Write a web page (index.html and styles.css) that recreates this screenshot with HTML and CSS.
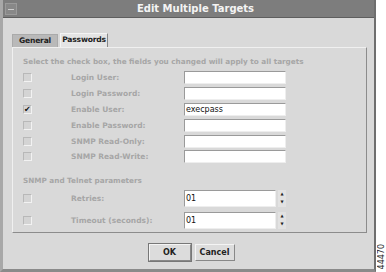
FILE: index.html
```html
<!DOCTYPE html>
<html lang="en">
<head>
<meta charset="utf-8"/>
<title>Edit Multiple Targets</title>
<link rel="stylesheet" href="styles.css">
</head>
<body>
<div class="screen">
  <div class="window">
    <div class="titlebar">
      <span class="winbtn"></span>
      <span class="title">Edit Multiple Targets</span>
    </div>
    <div class="body">
      <div class="tabs">
        <span class="tab general">General</span>
        <span class="tab active">Passwords</span>
      </div>
      <div class="panel">
        <p class="hint">Select the check box, the fields you changed will apply to all targets</p>

        <div class="row"><span class="check"></span><label>Login User:</label><input class="field" type="text"></div>
        <div class="row"><span class="check"></span><label>Login Password:</label><input class="field" type="text"></div>
        <div class="row"><span class="check on">&#10004;</span><label>Enable User:</label><input class="field" type="text" value="execpass"></div>
        <div class="row"><span class="check"></span><label>Enable Password:</label><input class="field" type="text"></div>
        <div class="row"><span class="check"></span><label>SNMP Read-Only:</label><input class="field" type="text"></div>
        <div class="row"><span class="check"></span><label>SNMP Read-Write:</label><input class="field" type="text"></div>

        <p class="section">SNMP and Telnet parameters</p>

        <div class="row spin-row"><span class="check"></span><label>Retries:</label>
          <div class="spinner"><input class="field" type="text" value="01"><span class="arrows"><i>&#9650;</i><i>&#9660;</i></span></div>
        </div>
        <div class="row spin-row"><span class="check"></span><label>Timeout (seconds):</label>
          <div class="spinner"><input class="field" type="text" value="01"><span class="arrows"><i>&#9650;</i><i>&#9660;</i></span></div>
        </div>
      </div>
      <div class="buttons">
        <button class="btn default">OK</button>
        <button class="btn">Cancel</button>
      </div>
    </div>
  </div>
  <div class="figno">44470</div>
</div>
</body>
</html>
```
FILE: styles.css
```css
*{margin:0;padding:0;box-sizing:border-box}
body{
  background:#fff;
  font-family:"DejaVu Sans",sans-serif;
  width:386px;
  height:272px;
  overflow:hidden;
}
.screen{display:flex;height:272px}
.window{
  width:376px;
  height:272px;
  background:#d9d9d9;
  border-left:3px solid #a8a8a8;
  border-right:2px solid #6e6e6e;
  border-bottom:3px solid #8a8a8a;
  display:flex;
  flex-direction:column;
}
.titlebar{
  height:18px;
  background:#7d7d7d;
  border-bottom:1px solid #5e5e5e;
  position:relative;
  display:flex;
  align-items:center;
  justify-content:center;
}
.winbtn{
  position:absolute;
  left:2px;top:3px;
  width:12px;height:12px;
  border:1px solid #9a9a9a;
  background:#888;
}
.winbtn::after{
  content:"";
  position:absolute;
  left:2px;top:5px;
  width:6px;height:1px;
  background:#ccc;
}
.title{
  color:#f4f4f4;
  font-size:10px;
  font-weight:bold;
  margin-left:14px;
}
.body{
  flex:1;
  padding:15px 7px 0 9px;
  display:flex;
  flex-direction:column;
}
.tabs{display:flex;gap:2px;height:14px;align-items:flex-end}
.tab{
  font-size:7.6px;
  letter-spacing:-0.2px;
  font-weight:bold;
  color:#222;
  text-align:center;
  white-space:nowrap;
  width:48px;
  padding-top:1px;
  height:13px;
  background:#b9b9b9;
  border:1px solid #aaa;
  border-bottom:none;
}
.tab.general{width:46px}
.tab.active{
  background:#e4e4e4;
  height:14px;
  border-color:#f4f4f4 #888 #888 #f4f4f4;
}
.panel{
  height:186px;
  border:1px solid #f0f0f0;
  border-right-color:#8c8c8c;
  border-bottom-color:#8c8c8c;
  padding:9px 0 0 10px;
}
.hint,.section{
  font-size:7.25px;
  font-weight:bold;
  color:#a6a6a6;
  height:11px;
  margin-bottom:2px;
}
.section{margin-top:11px;margin-bottom:2px}
.row{
  display:grid;
  grid-template-columns:48px 113px 102px;
  align-items:center;
  height:15.8px;
}
.row label{
  font-size:7.5px;
  font-weight:bold;
  color:#a6a6a6;
}
.check{
  width:9px;height:9px;
  border:1px solid #b8b8b8;
  border-right-color:#f2f2f2;
  border-bottom-color:#f2f2f2;
  background:#d4d4d4;
  font-size:8px;
  line-height:7px;
  color:#111;
  overflow:hidden;
}
.field{
  width:102px;
  height:13px;
  border:1px solid #9a9a9a;
  border-right-color:#eee;
  border-bottom-color:#eee;
  background:#fff;
  font-family:"DejaVu Sans",sans-serif;
  font-size:8px;
  color:#111;
  padding:0 1px;
  outline:none;
}
.spin-row{height:19px;margin-bottom:3px}
.spinner{display:flex;align-items:center;gap:2px}
.spinner .field{width:92px;height:17px}
.arrows{display:flex;flex-direction:column;width:8px;height:17px}
.arrows i{
  font-style:normal;
  font-size:4px;
  line-height:8.5px;
  text-align:center;
  color:#222;
  background:#e2e2e2;
}
.buttons{
  display:flex;
  justify-content:center;
  gap:4px;
  margin-top:11px;
  padding-left:4px;
}
.btn{
  font-family:"DejaVu Sans",sans-serif;
  font-size:8px;
  font-weight:bold;
  color:#222;
  height:17px;
  background:#dcdcdc;
  border:1px solid #f4f4f4;
  border-right-color:#888;
  border-bottom-color:#888;
}
.btn.default{width:42px;outline:1px solid #777}
.btn:not(.default){width:40px}
.figno{
  writing-mode:vertical-rl;
  transform:rotate(180deg);
  font-size:8px;
  font-family:"DejaVu Sans",sans-serif;
  color:#222;
  align-self:flex-end;
  margin-bottom:3px;
  margin-left:1px;
}
```
